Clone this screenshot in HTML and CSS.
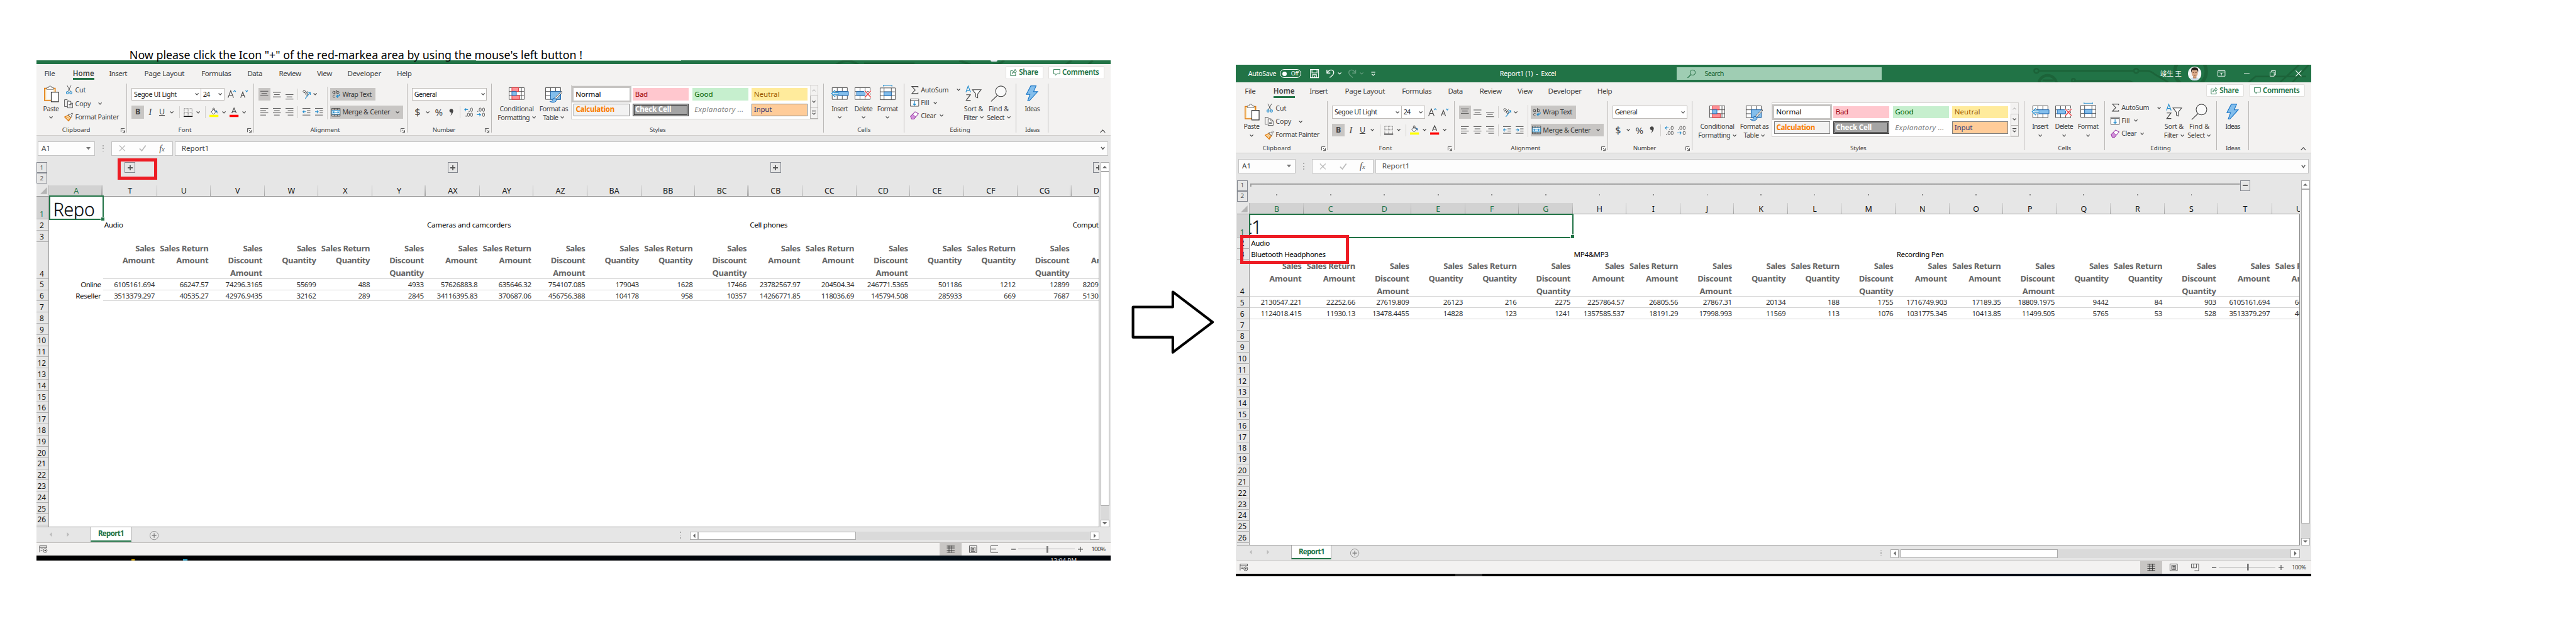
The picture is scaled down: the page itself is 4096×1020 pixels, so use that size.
FILE: index.html
```html
<!DOCTYPE html>
<html lang="en">
<head>
<meta charset="utf-8">
<title>Expanding a column group</title>
<link rel="stylesheet" href="styles.css">
</head>
<body>
<main class="stage" id="stage">
  <section class="win win-a" id="winA"></section>
  <section class="win win-b" id="winB"></section>
  <p class="caption"><span class="t" data-w="808">Now please click the Icon "+" of the red-markea area by using the mouse's left button !</span></p>
  <div class="mark mark-a"></div>
  <div class="mark mark-b"></div>
  <svg class="arrow" viewBox="0 0 150 118"><path d="M4 32H75V5L146 59 75 113V86H4Z" fill="#fff" stroke="#000" stroke-width="4.6" stroke-linejoin="round"/></svg>
</main>
<script src="app.js"></script>
</body>
</html>
```

FILE: styles.css
```css
* { box-sizing: border-box; }
html, body { margin: 0; background: #fff; overflow: hidden; }
.stage {
  position: relative; width: 4596px; height: 1144px; zoom: 0.8912; overflow: hidden;
  font-family: "Noto Sans", "Noto Sans CJK TC", sans-serif; font-size: 12px; color: #444; line-height: 14px;
}
svg { display: block; flex: none; overflow: visible; }
.t { display: inline-block; white-space: pre; flex: none; }
.row { display: flex; align-items: center; }
.grow { flex: 1; }

/* free canvas: windows and annotations */
.win { position: absolute; display: flex; flex-direction: column; background: #e6e6e6; }
.win-a { left: 65px; top: 108px; width: 1917px; height: 893px; }
.win-b { left: 2205px; top: 116px; width: 1919px; height: 913px; padding-left: 2px; }
.win-b .title, .win-b .tabs, .win-b .ribbon, .win-b .status, .win-b .taskbar { margin-left: -2px; padding-left: 2px; }
.caption { position: absolute; left: 231px; top: 84px; margin: 0; font-size: 20px; line-height: 28px; color: #000; }
.mark { position: absolute; border: 5.7px solid #ed1c24; }
.mark-a { left: 210px; top: 283px; width: 71px; height: 38px; }
.mark-b { left: 2213px; top: 420px; width: 194px; height: 51px; }
.arrow { position: absolute; left: 2018px; top: 516px; width: 150px; height: 118px; }

/* title bar */
.title { position: relative; flex: none; height: 31px; display: flex; align-items: center; background: #217346; color: #fff; overflow: hidden; }
.title > * { position: relative; }
.title .pattern { position: absolute; right: 0; top: 0; }
.title-cut { height: 7px; align-items: flex-start; }
.title-cut .edge { width: 366px; height: 1px; margin-left: 784px; background: #9fcdb3; }
.title-cut .chin { width: 13px; height: 2px; margin-left: 552px; border-radius: 0 0 7px 7px; background: #e8ecf4; }
.toggle { width: 38px; height: 16px; border: 1px solid #fff; border-radius: 8px; display: flex; align-items: center; justify-content: space-between; padding: 0 4px 0 3px; font-size: 10px; }
.toggle i { width: 8px; height: 8px; border-radius: 50%; background: #fff; }
.search { width: 366px; height: 22px; background: #9fcdb3; color: #0e5c2f; display: flex; align-items: center; gap: 16px; padding-left: 19px; }
.faded { opacity: .3; }

/* ribbon */
.tabs { flex: none; height: 30px; display: flex; align-items: flex-start; background: #f3f2f1; font-size: 13px; }
.tab { height: 28px; padding-top: 8px; line-height: 15px; }
.tab.on { font-weight: 600; border-bottom: 3.4px solid #217346; }
.btn { height: 23px; margin-top: 3px; background: #fff; border: 1px solid #e1dfdd; border-radius: 2px; display: flex; align-items: center; gap: 4px; color: #217346; font-weight: 600; font-size: 13px; }
.ribbon { flex: none; height: 97px; padding-top: 4px; background: #f3f2f1; border-bottom: 1px solid #d0cecc; display: flex; }
.group { flex: none; height: 92px; display: flex; flex-direction: column; background: linear-gradient(#b4b2b0, #b4b2b0) right top / 1px 88px no-repeat; }
.group-body { height: 76px; display: flex; }
.group-name { height: 16px; display: flex; align-items: center; padding-right: 4px; font-size: 11px; }
.group-name .mid { flex: 1; text-align: center; padding-right: 8px; }
.group-name .mid.solo { padding-right: 0; margin-right: -4px; }
.group-name svg { margin-top: 1px; }
.big { display: flex; flex-direction: column; align-items: center; }
.big .pic { height: 38px; display: flex; align-items: flex-start; justify-content: center; }
.big .row { height: 16px; gap: 4px; }
.big > .t { height: 15px; }
.stack { display: flex; flex-direction: column; }
.small { height: 24px; display: flex; align-items: center; gap: 3px; }
.small .ico { width: 16px; display: flex; justify-content: center; }
.cell { flex: none; height: 23px; display: flex; align-items: center; justify-content: center; }
.cell.on, .pill { background: #c8c6c4; }
.pill { height: 23px; display: flex; align-items: center; gap: 3px; padding-left: 4px; color: #333; }
.vr { flex: none; width: 1px; height: 21px; background: #d2d0ce; }
.select { height: 23px; background: #fff; border: 1px solid #bebbb8; display: flex; align-items: center; justify-content: space-between; padding: 0 3px; color: #222; }
.select + .select { margin-left: -1px; }
.b { font-weight: 700; font-size: 14px; } .i { font: italic 16px "Liberation Serif", serif; } .u { text-decoration: underline; font-size: 14px; }
.gallery { display: flex; width: 441px; height: 62px; margin-top: 2px; border: 1px solid #d2d0ce; background: #fff; }
.swatches { display: grid; grid-template-columns: repeat(4, 100px); grid-auto-rows: 22px; gap: 6px; padding: 5px 4px 0 3px; font-size: 13px; }
.sw { display: flex; align-items: center; padding-left: 4px; border: 0 solid #7f7f7f; }
.sw.normal { color: #000; background: #fff; outline: 3.4px solid #c6c4c2; }
.sw.bad { background: #ffc7ce; color: #9c0006; } .sw.good { background: #c6efce; color: #006100; }
.sw.neutral { background: #ffeb9c; color: #9c5700; }
.sw.calc { background: #f2f2f2; color: #fa7d00; border-width: 1px; padding-left: 3px; font-weight: 700; }
.sw.check { background: #a5a5a5; color: #fff; border: 3.4px double #3f3f3f; padding-left: 1px; font-weight: 700; }
.sw.expl { color: #7f7f7f; font-style: italic; }
.sw.input { background: #ffcc99; color: #3f3f76; border-width: 1px; padding-left: 3px; }
.pager { width: 15px; display: flex; flex-direction: column; background: #f3f2f1; }
.pager span { flex: 1; border: 1px solid #b4b2b0; margin: -1px -1px 0 0; display: flex; align-items: center; justify-content: center; }
.pager span:first-child { border-color: #d2d0ce; opacity: .55; }

/* formula bar */
.formula { flex: none; height: 36px; padding: 10px 5px 0 2px; display: flex; font-size: 13px; }
.box { height: 26px; border: 1px solid #c3c3c3; background: #fdfdfd; display: flex; align-items: center; color: #444; }
.dots { display: flex; flex-direction: column; gap: 3px; align-self: center; }
.dots i { width: 2px; height: 2px; background: #aaa; }

/* sheet */
.sheet { flex: none; height: 664px; display: flex; }
.grid { width: 1896px; height: 664px; overflow: hidden; display: flex; flex-direction: column; }
.outline { flex: none; height: 53px; display: flex; padding-top: 12px; }
.levels { width: 23px; flex: none; }
.lv { width: 19px; height: 19px; border: 1px solid #83878f; display: flex; align-items: center; justify-content: center; font-size: 11px; color: #555; }
.oc { flex: none; width: 96px; height: 41px; display: flex; flex-direction: column; align-items: center; }
.oc.line { background: linear-gradient(#999, #999) 0 6px / 100% 2px no-repeat; padding-top: 25px; }
.oc.line i { width: 2px; height: 2px; background: #888; }
.oc.first { background: linear-gradient(#999, #999) 1px 6px / 100% 2px no-repeat, linear-gradient(#999, #999) 1px 6px / 2px 6px no-repeat; }
.oc.last { background: linear-gradient(#999, #999) 0 6px / 39px 2px no-repeat; }
.oc .lv { background: #e6e6e6; }
.heads { flex: none; height: 20px; display: flex; border-bottom: 1px solid #999; color: #111; font-size: 14px; }
.corner { width: 23px; flex: none; border-right: 1px solid #b4b4b4; display: flex; justify-content: flex-end; align-items: center; padding: 0 3px 0 0; }
.h { flex: none; width: 96px; height: 19px; display: flex; align-items: center; justify-content: center; background: linear-gradient(#ccc, #999) right / 1px 100% no-repeat; padding-top: 2px; }
.h.gap { background: linear-gradient(#ccc, #999) 93px 0 / 1px 100% no-repeat, linear-gradient(#ccc, #999) right / 1px 100% no-repeat; }
.h.on { background-color: #d2d2d2; color: #217346; }
.rows { flex: 1; background: #fff; border-right: 1px solid #8c8c8c; border-bottom: 1px solid #999; overflow: hidden; }
.grid { position: relative; }
.r { display: flex; height: 20px; }
.r.r1 { height: 41px; } .r.r4 { height: 66px; }
.n { flex: none; width: 23px; background: #e6e6e6; border-right: 1px solid #999; border-bottom: 1px solid #b0b0b0; display: flex; justify-content: center; align-items: flex-end; padding: 0 3px 0 0; font-size: 13.5px; line-height: 17px; color: #111; }
.n.on { background: #d2d2d2; color: #217346; }
.c { flex: none; width: 96px; display: flex; flex-direction: column; align-items: flex-end; padding: 0 4px 0 2px; font-size: 13px; line-height: 21px; color: #333; }
.c.cut, .c.left { align-items: flex-start; color: #000; }
.c.cut.num { padding-left: 20px; color: #333; }
.c.rule { border-bottom: 1px solid #d3d3d3; }
.c.lab { color: #111; }
.r4 .c { font-size: 14.67px; font-weight: 700; line-height: 22px; color: #666; padding-top: 1px; }
.c.sel { font: 300 32px/46px "Open Sans", sans-serif; color: #000; -webkit-text-stroke: .4px #000; padding: 0; overflow: hidden; }
.sel-a { align-items: flex-start; padding-left: 7px !important; }
.c.sel-b { width: 21px; }
.pick { position: absolute; top: 71px; left: 22px; height: 44px; border: 2.4px solid #217346; }
.pick::after { content: ""; position: absolute; right: -4px; bottom: -3px; width: 6px; height: 6px; background: #217346; border: solid #fff; border-width: 1.2px 0 0 1.2px; }
.pick-a { width: 98px; } .pick-b { width: 579px; left: 21px; }
.vbar { width: 15px; height: 652px; margin: 12px 0 0 3px; background: #dadada; display: flex; flex-direction: column; }
.knob { background: #fff; border: 1px solid #ababab; display: flex; align-items: center; justify-content: center; flex: none; }

/* bottom bars */
.sheetbar { flex: none; height: 28px; display: flex; align-items: flex-start; border-bottom: 1px solid #c0bebc; }
.sheettab { width: 72px; height: 25px; margin-left: 35px; background: #fff; border: 1px solid #ababab; border-top: 0; border-bottom: 2.4px solid #217346; color: #217346; font-weight: 700; font-size: 13px; display: flex; align-items: center; justify-content: center; }
.hbar { width: 730px; height: 15px; margin: 7px 0 0 16px; background: #dadada; display: flex; }
.status { flex: none; height: 22px; display: flex; align-items: center; background: #f3f2f1; }
.view { width: 40px; height: 22px; display: flex; align-items: center; justify-content: center; }
.view.on { background: #c8c6c4; }
.slider { width: 101px; height: 12px; margin: 0 5px 0 5px; background: linear-gradient(#777, #777) 50px 0 / 3px 12px no-repeat, linear-gradient(#aaa, #aaa) 0 5px / 100% 1.2px no-repeat; }
.pct { font-size: 11px; margin-left: 15px; }
.taskbar { flex: none; height: 9px; display: flex; align-items: flex-end; background: linear-gradient(90deg, #000 0, #010308 60%, #00101c 78%, #010309 100%); overflow: hidden; }
.win-b .taskbar { height: 5px; }
.clock { align-self: flex-start; height: 6px; margin: 3px 0 0 1369px; color: #ddd; font-size: 11px; line-height: 12px; overflow: hidden; }
```

FILE: app.js
```js
const T = (s, w, c = '') => `<span class="t ${c}"${w ? ` data-w="${w}"` : ''}>${s.replace(/&/g, '&amp;')}</span>`;
const svg = (w, h, body, extra = '') => `<svg width="${w}" height="${h}" viewBox="0 0 ${w} ${h}" fill="none" stroke="#444" ${extra}>${body}</svg>`;
const CH = svg(7, 4, '<path d="M.7.5 3.5 3.2 6.3.5" stroke-width="1.3"/>');
const cell = (w, s, c = '') => `<div class="cell ${c}" style="width:${w}px">${s}</div>`;
const sp = w => `<span style="width:${w}px;flex:none"></span>`;
const lines = (ys, ws, al) => ys.map((y, i) => { const x = al === 'r' ? 14 - ws[i] : al === 'c' ? (14 - ws[i]) / 2 : 0; return `<path d="M${x} ${y}h${ws[i]}"/>`; }).join('');

const I = {
  paste: svg(28, 30, '<path d="M2 5h19v22H2z" fill="#fbe3b5" stroke="#e07b10" stroke-width="1.6"/><path d="M5 7h13v18H5z" fill="#fafafa" stroke="none"/><path d="M6 7V4h3a3 3 0 0 1 6 0h3v3z" fill="#fff" stroke="#666"/><path d="M14 12h13v17H14z" fill="#fff" stroke="#333" stroke-width="1.3"/>'),
  cut: svg(11, 16, '<path d="M2 0 8 11M9 0 3 11"/><circle cx="2.5" cy="13" r="2" stroke="#1e8bcd" stroke-width="1.3"/><circle cx="8.5" cy="13" r="2" stroke="#1e8bcd" stroke-width="1.3"/>'),
  copy: svg(16, 16, '<path d="M5 13H.7V.7h5L8 3"/><path d="M6 3.5h5.5L15 7v8.3H6z" fill="#fff"/><path d="M11 4v3.5h4M8 9.500h5M8 12h5"/>'),
  brush: svg(16, 16, '<path d="M1 8 7 5l5 4-4 6z" fill="#fbe3b5" stroke="#e07b10" stroke-width="1.5"/><path d="m3 10 5-1M8 14l1-4" stroke="#e07b10"/><path d="m7 4 5 5 1.500-2-1-1L15.500 2 14 .7 10.500 4 9 3z" fill="#fff"/>'),
  launch: svg(8, 8, '<path d="M.5 7V.5H7M3 3l4 4M7.300 3.500v4h-4"/>'),
  growA: svg(15, 15, '<path d="M.7 14 5.500 1.500 10.500 14M2.500 9.500h6.300" stroke-width="1.2"/><path d="M10.500 3.500 12.500 1l2 2.500" stroke="#1e8bcd" stroke-width="1.2"/>'),
  shrinkA: svg(14, 15, '<path d="M.7 14 4.500 4 8.500 14M2 10.500h5" stroke-width="1.2"/><path d="m9.500 1 2 2.500 2-2.500" stroke="#1e8bcd" stroke-width="1.2"/>'),
  borders: svg(16, 16, '<path d="M1 1h14v13M1 1v13M8 1v13M1 7.500h14" stroke-dasharray="1 1"/><path d="M0 15h16" stroke="#111" stroke-width="1.6"/>'),
  fill: svg(16, 16, '<path d="M3 7 8 2l4 5-5 4z" fill="#fff"/><path d="M6 5V1.500a1.500 1.500 0 0 1 3 0V6"/><path d="M11 4q4 0 3 6-1-4-4-4" fill="#2b6ea8" stroke="none"/><path d="M0 14h16" stroke="#ff0" stroke-width="4"/>'),
  color: svg(16, 16, '<path d="M4 9 8 0l4 9M5.300 6.500h5.400" stroke-width="1.3"/><path d="M0 14h16" stroke="#f00" stroke-width="4"/>'),
  vTop: svg(14, 17, lines([2.5, 6.5, 10.5], [14, 10, 14], 'c')),
  vMid: svg(14, 17, lines([4.5, 8.5, 12.5], [14, 10, 14], 'c')),
  vBot: svg(14, 17, lines([8.5, 12.5, 16.5], [14, 10, 14], 'c')),
  hL: svg(14, 14, lines([.5, 4.500, 8.500, 12.500], [14, 10, 14, 10], 'l')),
  hC: svg(14, 14, lines([.5, 4.500, 8.500, 12.500], [14, 10, 14, 10], 'c')),
  hR: svg(14, 14, lines([.5, 4.500, 8.500, 12.500], [14, 10, 14, 10], 'r')),
  orient: svg(16, 16, '<g transform="rotate(45 6 6)"><circle cx="2.500" cy="5" r="2"/><path d="M4.700 2.500v5M7 0v7.500"/><circle cx="9" cy="5" r="2"/></g><path d="M6 15.500 15 4.500M10.500 4.500H15V9" stroke="#1e8bcd" stroke-width="1.2"/>'),
  out: svg(14, 14, '<path d="M0 .5h14M8 4.500h6M8 8.500h6M0 12.500h14"/><path d="M6 6.500H.7M3 4 .7 6.500 3 9" stroke="#1e8bcd" stroke-width="1.2"/>'),
  inn: svg(14, 14, '<path d="M0 .5h14M8 4.500h6M8 8.500h6M0 12.500h14"/><path d="M0 6.500h5.500M3.300 4l2.300 2.500L3.300 9" stroke="#1e8bcd" stroke-width="1.2"/>'),
  wrap: svg(15, 15, '<circle cx="3" cy="4.500" r="2"/><path d="M5.300 2.500v4.500M8.500 0v7"/><circle cx="10.500" cy="4.500" r="2"/><path d="M5 9.500a2.300 2.300 0 1 0 0 4"/><path d="M13.500 7.500q1 4-5.500 4M10.500 8.800 8 11.500l2.500 2.700" stroke="#1e8bcd" stroke-width="1.5"/>'),
  merge: svg(16, 15, '<path d="M.5.5h15v14H.500zM.5 3.500h15M.5 11.500h15M5.500.5v3M10.500.5v3M5.500 11.500v3M10.500 11.500v3"/><path d="M1 4h14v7H1z" fill="#fff" stroke="#1e8bcd"/><path d="M2.500 7.500h11M5 5.500l-2 2 2 2M11 5.500l2 2-2 2" stroke="#1e8bcd" stroke-width="1.2"/>'),
  cond: svg(28, 22, '<path d="M.5.5h27v21H.500zM.5 7.500h27M.5 14.500h27M22.500.5v21" fill="#fff"/><path d="M5.500.5h12v7h-12zM5.500 14.500h14v7h-14z" fill="#ff8f94" stroke="#e0262d"/><path d="M5.500 7.500h8v7h-8z" fill="#83beec" stroke="#1464b0"/>'),
  table: svg(30, 27, '<path d="M.5.5h27v21H.500zM.5 7.500h27M.5 14.500h27M9.500.5v21M18.500.5v21" fill="#fff"/><path d="M9.500 7.500h18v14h-18z" fill="#83beec" stroke="#1464b0"/><path d="M29 7 17 19l2 2L30 9z" fill="#fff"/><path d="M17 19q-4 0-4 4-1 3-5 2 6 4 11 0 2-2 0-4z" fill="#83beec" stroke="#1464b0"/>'),
  ins: svg(32, 22, '<path d="M2.500.5h27v21h-27zM11.500.5v21M20.500.5v21M2.500 7.500h27M2.500 14.500h27" fill="#fff"/><path d="M10 7.500h21.500v7H10z" fill="#83beec" stroke="#1464b0"/><path d="M13 9.500H6M13 12.500H6M8 5 1.500 11 8 17" stroke="#fff" stroke-width="3"/><path d="M14 9.500H5M14 12.500H5M8 5 1.500 11 8 17" stroke="#1e8bcd" stroke-width="1.500"/>'),
  del: svg(30, 22, '<path d="M.5.5h27v21H.500zM9.500.5v21M18.500.5v21" fill="#fff"/><path d="M.5 7.500h27M.5 14.500h27"/><path d="M3.500 7.500h15v7h-15z" fill="#83beec" stroke="#1464b0"/><path d="m18 6 11 12M29 6 18 18" stroke="#f3f2f1" stroke-width="4"/><path d="m18 6 11 12M29 6 18 18" stroke="#ea4046" stroke-width="1.500"/>'),
  fmt: svg(28, 27, '<path d="M6 1.500h16M6.500 0v3M21.500 0v3" stroke="#1e8bcd"/><path d="M.5 5.500h27v21H.500zM7.500 5.500v21M20.500 5.500v21M.5 12.500h27M.5 19.500h27" fill="#fff"/><path d="M7.500 12.500h13v7h-13z" fill="#83beec" stroke="#1464b0"/>'),
  sum: svg(13, 14, '<path d="M12 2.500V.7H1L7 7l-6 6.300h11v-1.800" stroke-width="1.200"/>'),
  down: svg(16, 14, '<path d="M.5.5h15v13H.500zM.5 3h15" fill="#fff"/><path d="M8 4.500v7M5.300 9 8 11.700 10.700 9" stroke="#1e8bcd" stroke-width="1.300"/>'),
  clear: svg(16, 15, '<path d="M1 9 9 1l6 3.500L7 14H3z" fill="#fff" stroke="#9b3fa8" stroke-width="1.200"/><path d="M1 9 4.500 5.500 10 10 7 14H3z" fill="#d390da" stroke="#9b3fa8"/>'),
  sort: svg(29, 28, '<path d="M1 12 5 1l4.300 11M2.500 8.500h5.500" stroke="#1e8bcd" stroke-width="1.300"/><path d="M1.500 16.500H9L1.500 26.500H9.500" stroke-width="1.300"/><path d="M12.500 7.500h15.500l-6 7.500v7l-3.500-1.500V15z" fill="#fff" stroke-width="1.200"/>'),
  find: svg(30, 29, '<circle cx="18.500" cy="10.500" r="9.500" fill="#fafafa" stroke-width="1.200"/><path d="M12 18 1 28.500" stroke-width="1.300"/>'),
  idea: svg(22, 28, '<path d="M9 .7h9.500L14 11h7.300L6.500 27.300H3.500L7.500 16H1z" fill="#83beec" stroke="#1472c4" stroke-width="1.200"/>'),
  share: svg(12, 14, '<path d="M5 4H1v9h9V9" stroke="#217346"/><path d="M4 9q0-4 5-5V1.500L11.500 5 9 8.500V6.500Q6 6.500 4 9z" stroke="#217346"/>'),
  comment: svg(12, 12, '<path d="M.5.500h11v8H6L3.500 11V8.500h-3z" stroke="#217346"/>'),
  decL: svg(16, 17, '<path d="M7 4H1M3.500 1.500 1 4l2.500 2.500" stroke="#1e8bcd" stroke-width="1.200"/><circle cx="3.500" cy="15.500" r=".6"/><rect x="6" y="10" width="3.500" height="6" rx="1.700"/><rect x="11.500" y="10" width="3.500" height="6" rx="1.700"/><rect x="11.500" y="1" width="3.500" height="6" rx="1.700"/><circle cx="9" cy="7" r=".4"/>'),
  decR: svg(16, 17, '<circle cx="2" cy="7" r=".4"/><rect x="4.500" y="1" width="3.500" height="6" rx="1.700"/><rect x="10.500" y="1" width="3.500" height="6" rx="1.700"/><path d="M0 13h7M4.500 10.500 7 13l-2.500 2.500" stroke="#1e8bcd" stroke-width="1.200"/><rect x="10.500" y="10" width="3.500" height="6" rx="1.700"/>')
};

const group = (w, body, name, nw, launch) => `<div class="group" style="width:${w}px"><div class="group-body">${body}</div><div class="group-name"><span class="mid ${launch ? '' : 'solo'}">${T(name, nw)}</span>${launch ? I.launch : ''}</div></div>`;
const big = (w, top, icon, l1, w1, l2, w2) => `<div class="big" style="width:${w}px"><div class="pic" style="padding-top:${top}px">${icon}</div>${T(l1, w1)}<div class="row">${l2 ? T(l2, w2) : ''}${l2 === null ? '' : CH}</div></div>`;
const small = (icon, s, w, after, h) => `<div class="small" style="height:${h || 24}px"><span class="ico">${icon}</span>${T(s, w)}${after ? sp(after) + CH : ''}</div>`;

function ribbon() {
  const clip = `<div style="padding-left:2px">${big(48, 4, I.paste, 'Paste', 28, '', 0)}</div><div class="stack">${small(I.cut, 'Cut', 19)}${small(I.copy, 'Copy', 28, 7)}${small(I.brush, 'Format Painter', 78)}</div>`;
  const font = `<div class="stack" style="padding:8px 0 0 8px;gap:9px"><div class="row"><div class="select" style="width:124px">${T('Segoe UI Light', 76)}${CH}</div><div class="select" style="width:43px">${T('24', 12)}${CH}</div>${sp(5)}${I.growA}${sp(8)}${I.shrinkA}</div>
  <div class="row">${cell(22, '<span class="b">B</span>', 'on')}${cell(22, '<span class="i">I</span>')}${cell(20, '<span class="u">U</span>')}${cell(16, CH)}${sp(5)}<i class="vr"></i>${sp(7)}${I.borders}${cell(20, CH)}${sp(2)}<i class="vr"></i>${sp(7)}${I.fill}${cell(20, CH)}${I.color}${cell(20, CH)}</div></div>`;
  const align = `<div class="stack" style="padding:8px 0 0 8px;gap:9px"><div class="row">${cell(22, I.vTop, 'on')}${cell(22, I.vMid)}${cell(22, I.vBot)}${sp(4)}<i class="vr"></i>${sp(7)}${I.orient}${sp(4)}${CH}</div><div class="row">${cell(22, I.hL)}${cell(22, I.hC)}${cell(22, I.hR)}${sp(4)}<i class="vr"></i>${sp(8)}${I.out}${sp(8)}${I.inn}</div></div>
  <i class="vr" style="height:58px;margin:6px 4px 0 8px"></i><div class="stack" style="padding-top:8px;gap:9px"><div class="pill" style="width:81px">${I.wrap}${T('Wrap Text', 52)}</div><div class="pill" style="width:130px;padding-left:3px">${I.merge}${T('Merge & Center', 85)}${sp(4)}${CH}</div></div>`;
  const num = `<div class="stack" style="padding:8px 0 0 8px;gap:9px"><div class="select" style="width:134px">${T('General', 40)}${CH}</div><div class="row">${cell(20, '<span style="font-size:18px">$</span>')}${cell(16, CH)}${cell(24, '<span style="font-size:17px">%</span>')}${cell(20, '<svg width="8" height="13" viewBox="0 0 8 13"><circle cx="4" cy="3.500" r="3.300" fill="#444"/><path d="M7.300 3.500Q7.500 9 2.500 12.500 5 9 4 6z" fill="#444"/></svg>')}${sp(5)}<i class="vr"></i>${sp(7)}${I.decL}${sp(7)}${I.decR}</div></div>`;
  const sw = [['normal', 'Normal', 45], ['bad', 'Bad', 22.5], ['good', 'Good', 33], ['neutral', 'Neutral', 46], ['calc', 'Calculation', 69], ['check', 'Check Cell', 64], ['expl', 'Explanatory ...', 88], ['input', 'Input', 32]];
  const up = svg(7, 4, '<path d="M.7 3.500 3.500.8 6.300 3.500"/>');
  const styles = `${sp(10)}${big(70, 7, I.cond, 'Conditional', 61, 'Formatting', 57)}${big(62, 7, I.table, 'Format as', 51, 'Table', 27)}<div class="gallery"><div class="swatches">${sw.map(s => `<div class="sw ${s[0]}">${T(s[1], s[2])}</div>`).join('')}</div><div class="grow"></div><div class="pager"><span>${up}</span><span>${CH}</span><span>${svg(7, 8, '<path d="M0 .7h7M.7 4 3.500 6.700 6.300 4" stroke-width="1.300"/>')}</span></div></div>`;
  const cells = `${sp(7)}${big(42, 7, I.ins, 'Insert', 28.6, '', 0)}${big(43, 7, I.del, 'Delete', 32, '', 0)}${big(43, 2, I.fmt, 'Format', 36.6, '', 0)}`;
  const edit = `<div class="stack" style="width:101px;padding-left:11px">${small(I.sum, 'AutoSum', 49.5, 8, 23)}${small(I.down, 'Fill', 15, 1, 23)}${small(I.clear, 'Clear', 27, 1, 23)}</div>${big(46, 4, I.sort, 'Sort &', 34, 'Filter', 25)}${big(44, 4, I.find, 'Find &', 36, 'Select', 31)}`;
  const ideas = big(57, 4, I.idea, 'Ideas', 26, null);
  return `<div class="ribbon">${group(162, clip, 'Clipboard', 50.5, 1)}${group(226, font, 'Font', 23.7, 1)}${group(274, align, 'Alignment', 52.7, 1)}${group(150, num, 'Number', 40.6, 1)}${group(593, styles, 'Styles', 28.6)}${group(143, cells, 'Cells', 23.7)}${group(200, edit, 'Editing', 36.6)}${group(58, ideas, 'Ideas', 26)}<span class="grow"></span>${svg(10, 6, '<path d="M.7 5.500 5 1l4.300 4.500" stroke-width="1.300"/>', 'style="margin:82px 9px 0 0"')}</div>`;
}

function tabs() {
  const list = [['File', 14, 19], ['Home', 32, 38], ['Insert', 26.6, 32], ['Page Layout', 31, 71.4], ['Formulas', 30.4, 52.7], ['Data', 29.4, 26.3], ['Review', 30, 39.3], ['View', 28.5, 26.8], ['Developer', 27.6, 60], ['Help', 28, 26.3]];
  return `<div class="tabs">${list.map((t, i) => `<div class="tab ${i === 1 ? 'on' : ''}" style="margin-left:${t[1]}px">${T(t[0], t[2])}</div>`).join('')}<span class="grow"></span><div class="btn" style="width:68px;padding-left:7px">${I.share}${T('Share', 34)}</div>${sp(8)}<div class="btn" style="width:100px;padding-left:8px">${I.comment}${T('Comments', 65.6)}</div>${sp(12)}</div>`;
}

const formula = () => `<div class="formula"><div class="box" style="width:102px;padding-left:6px">${T('A1', 16)}<span class="grow"></span><svg width="8" height="5" style="margin-right:6px"><path d="M0 0h8L4 5z" fill="#777"/></svg></div><div class="dots" style="margin:0 14px"><i></i><i></i><i></i></div><div class="box" style="width:110px;padding-left:12px">${svg(12, 11, '<path d="m1 .5 10 10M11 .5 1 10.500" stroke="#bbb" stroke-width="1.500"/>')}${sp(24)}${svg(13, 11, '<path d="m1 6 4 4L12 .5" stroke="#bbb" stroke-width="2"/>')}${sp(23)}<span style="font:italic 16px 'Liberation Serif',serif;color:#555">f<span style="font-size:12px">x</span></span></div>${sp(3)}<div class="box grow" style="padding-left:11px">${T('Report1', 49)}<span class="grow"></span>${svg(8, 6, '<path d="m1 1 3 4 3-4" stroke="#555" stroke-width="1.600"/>', 'style="margin-right:4px"')}</div></div>`;

const HW = { Sales: 34.4, 'Sales Return': 86.7, Amount: 57.4, Quantity: 61, Discount: 61.2 };
const HEAD = [['Sales', 'Amount'], ['Sales Return', 'Amount'], ['Sales', 'Discount', 'Amount'], ['Sales', 'Quantity'], ['Sales Return', 'Quantity'], ['Sales', 'Discount', 'Quantity']];
const numT = s => T(s, s.replace('.', '').length * 7 + (s.includes('.') ? 2.7 : 0));

function sheet(d) {
  const n = d.cols.length, first = d.first;
  const oc = d.cols.map((c, i) => d.outline(c, i)).join('');
  const heads = d.cols.map(c => `<div class="h ${d.gaps.includes(c) ? 'gap' : ''} ${d.on.includes(c) ? 'on' : ''}">${c}</div>`).join('');
  const text = (map) => d.cols.map(c => `<div class="c left">${map[c] ? T(map[c][0], map[c][1]) : ''}</div>`).join('');
  const head = d.cols.map((c, i) => i < first ? '<div class="c"></div>' : `<div class="c rule">${HEAD[(i - first) % 6].map(s => T(s, HW[s])).join('')}</div>`).join('');
  const nums = (a, lab) => d.cols.map((c, i) => {
    if (i < first) return `<div class="c lab">${T(lab[0], lab[1])}</div>`;
    const v = a[i - first], cut = d.cutNum && i === n - 1;
    return `<div class="c rule ${cut ? 'cut num' : ''}">${numT(v)}</div>`;
  }).join('');
  const r = (k, body, cls = '') => `<div class="r ${cls}"><div class="n ${k === 1 ? 'on' : ''}">${k}</div>${body}</div>`;
  let rows = r(1, d.cell1, 'r1') + r(2, text(d.row2)) + r(3, text(d.row3)) + r(4, head, 'r4') + r(5, nums(d.n5, ['Online', 36])) + r(6, nums(d.n6, ['Reseller', 45]));
  for (let k = 7; k <= 26; k++) rows += r(k, '');
  rows += '<div class="r"><div class="n"></div></div>';
  const tri = (p, w, h) => `<svg width="${w}" height="${h}"><path d="${p}" fill="#666"/></svg>`;
  return `<div class="sheet"><div class="grid"><div class="outline"><div class="levels"><div class="lv">1</div><div class="lv">2</div></div>${oc}</div><div class="heads"><div class="corner"><svg width="12" height="12"><path d="M12 0v12H0z" fill="#b4b4b4"/></svg></div>${heads}</div><div class="rows">${rows}</div><div class="pick ${d.pick}"></div></div>
  <div class="vbar"><div class="knob" style="height:16px">${tri('M0 4h8L4 0z', 8, 4)}</div><div class="knob" style="height:597px"></div><span class="grow"></span><div class="knob" style="height:14px">${tri('M0 0h8L4 4z', 8, 4)}</div></div></div>
  <div class="sheetbar"><svg width="40" height="10" style="margin:8px 0 0 22px"><path d="M5 0v8L1 4zM32 0v8l4-4z" fill="#bbb"/></svg><div class="sheettab">${T('Report1', 46)}</div>${svg(16, 16, '<circle cx="8" cy="8" r="7.500" stroke="#888"/><path d="M8 4v8M4 8h8" stroke="#777" stroke-width="1.300"/>', 'style="margin:6px 0 0 33px"')}<span class="grow"></span><div class="dots"><i></i><i></i><i></i></div><div class="hbar"><div class="knob" style="width:15px">${tri('M4 0v8L0 4z', 4, 8)}</div>${sp(d.hoff)}<div class="knob" style="width:281px"></div><span class="grow"></span><div class="knob" style="width:16px">${tri('M0 0v8l4-4z', 4, 8)}</div></div>${sp(21)}</div>
  <div class="status">${sp(5)}${svg(16, 13, '<path d="M1 12V.700h13V4M1 3.500h13M3 6h4M3 8.500h3"/><circle cx="11" cy="9" r="3.500"/><circle cx="11" cy="9" r="1" fill="#444"/>')}<span class="grow"></span>
  <div class="view on">${svg(15, 13, '<path d="M.5 1h14M.5 4.500h14M.5 8.500h14M.5 12h14M4.500 0v13M9.500 0v13" stroke="#333"/>')}</div><div class="view">${svg(14, 13, '<path d="M.5.5h13v12H.500zM3.500 3h7v7.500h-7zM5 5h4M5 7h4M5 9h4"/>')}</div><div class="view" style="width:36px">${svg(14, 13, d.third)}</div>${sp(12)}${svg(8, 9, '<path d="M0 4.500h8" stroke-width="1.400"/>')}<div class="slider"></div>${svg(9, 9, '<path d="M0 4.500h9M4.500 0v9" stroke-width="1.200"/>')}${T('100%', 25, 'pct')}${sp(10)}</div>
  <div class="taskbar">${d.task}</div>`;
}

const plus = svg(9, 9, '<path d="M0 4.500h9M4.500 0v9" stroke="#555" stroke-width="2"/>');
const A = {
  cols: ['A', 'T', 'U', 'V', 'W', 'X', 'Y', 'AX', 'AY', 'AZ', 'BA', 'BB', 'BC', 'CB', 'CC', 'CD', 'CE', 'CF', 'CG', 'DF'],
  first: 1, on: ['A'], gaps: ['A', 'Y', 'BC', 'CG'], cutNum: true, hoff: 0, pick: 'pick-a',
  outline: c => `<div class="oc">${['T', 'AX', 'CB', 'DF'].includes(c) ? `<div class="lv">${plus}</div>` : ''}</div>`,
  cell1: `<div class="c sel sel-a">${T('Repo', 74)}</div>`,
  row2: { T: ['Audio', 33.5], AX: ['Cameras and camcorders', 149.5], CB: ['Cell phones', 67], DF: ['Comput', 46] }, row3: {},
  n5: '6105161.694 66247.57 74296.3165 55699 488 4933 57626883.8 635646.32 754107.085 179043 1628 17466 23782567.97 204504.34 246771.5365 501186 1212 12899 8209'.split(' '),
  n6: '3513379.297 40535.27 42976.9435 32162 289 2845 34116395.83 370687.06 456756.388 104178 958 10357 14266771.85 118036.69 145794.508 285933 669 7687 5130'.split(' '),
  third: '<path d="M13.500.5H.500v12h13M.5 6.500H10"/>',
  task: '<svg width="270" height="2" style="margin-left:170px"><path d="M0 0h6v2H0z" fill="#e8b400"/><path d="M92 0h8v2h-8z" fill="#2cb5e0"/></svg><div class="clock"><span class="t" data-w="47">12:04 PM</span></div>'
};
const B = {
  cols: 'BCDEFGHIJKLMNOPQRSTU'.split(''), first: 0, on: 'BCDEFG'.split(''), gaps: [], hoff: 3, pick: 'pick-b',
  outline: (c, i) => c === 'U' ? '<div class="oc"></div>' : c === 'T' ? `<div class="oc last"><div class="lv">${svg(9, 9, '<path d="M0 4.500h9" stroke="#555" stroke-width="2"/>')}</div></div>` : `<div class="oc line ${i ? '' : 'first'}"><i></i></div>`,
  cell1: `<div class="c sel sel-b">${T('t1', 28)}</div>`,
  row2: { B: ['Audio', 33.5] }, row3: { B: ['Bluetooth Headphones', 133], H: ['MP4&MP3', 62], N: ['Recording Pen', 84] },
  n5: '2130547.221 22252.66 27619.809 26123 216 2275 2257864.57 26805.56 27867.31 20134 188 1755 1716749.903 17189.35 18809.1975 9442 84 903 6105161.694 66247.57'.split(' '),
  n6: '1124018.415 11930.13 13478.4455 14828 123 1241 1357585.537 18191.29 17998.993 11569 113 1076 1031775.345 10413.85 11499.505 5765 53 528 3513379.297 40535.27'.split(' '),
  third: '<path d="M.5 7.500V.500h13v12H6M4.500.5v7H.500M9.500.5v7h-5"/>',
  task: '<svg width="48" height="5" style="margin-left:389px"><path d="M0 0h48v5H0z" fill="#333"/></svg>'
};

const W = 'stroke="#fff"';
const titleA = '<div class="title title-cut"><svg class="pattern" width="560" height="7" fill="none" stroke="#1c6339" stroke-width="4"><path d="M70 8q20-14 40 0M120 6h90M290 0l20 8M370 0q-8 8-20 8M480 8l10-8M520 8l8-8"/></svg><span class="edge"></span><span class="chin"></span></div>';
const titleB = `<div class="title"><svg class="pattern" width="500" height="31" fill="none" stroke="#1c6339" stroke-width="3"><circle cx="9" cy="11" r="4"/><path d="M13 11h169M192 11h14q8 0 14 6l24 14"/><circle cx="187" cy="11" r="4"/><circle cx="29" cy="35" r="16" stroke-width="5"/><path d="M20 28h20M24 32h14"/><circle cx="75" cy="28" r="3"/><path d="M79 29h96l8 4M388 31l12-10h90M444 31 480-2M466 31l30-32"/><circle cx="284" cy="12" r="28" stroke-width="6"/></svg>
${sp(20)}${T('AutoSave', 50)}${sp(7)}<div class="toggle"><i></i>${T('Off', 13.4)}</div>${sp(15)}
${svg(16, 16, `<path d="M.7.7h14.600v14.600H.700zM3.500.7v6h9v-6M4.500 15v-5h7v5M8.500 12v3" ${W} stroke-width="1.200"/>`)}${sp(14)}
${svg(14, 16, `<path d="M1 1v6h6M1 7Q5 1 9 1.500q5 1 4 6Q12 11 6 15" ${W} stroke-width="1.500"/>`)}${sp(6)}${svg(7, 4, `<path d="M.7.5 3.500 3.200 6.300.500" ${W} stroke-width="1.300"/>`)}${sp(12)}
<span class="row faded">${svg(14, 16, `<path d="M13 1v6H7M13 7Q9 1 5 1.500q-5 1-4 6Q2 11 8 15" ${W} stroke-width="1.500"/>`)}${sp(6)}${svg(7, 4, `<path d="M.7.5 3.500 3.200 6.300.500" ${W} stroke-width="1.300"/>`)}</span>${sp(13)}
${svg(8, 8, `<path d="M.5 1h7M1.200 4 4 6.700 6.800 4" ${W} stroke-width="1.300"/>`)}${sp(222)}${T('Report1 (1)  -  Excel', 100.5)}${sp(215)}
<div class="search">${svg(15, 15, '<circle cx="9.500" cy="5" r="4.500" stroke="#0e5c2f"/><path d="M6.500 8.500.500 14.500" stroke="#0e5c2f" stroke-width="1.200"/>')}${T('Search', 34)}</div><span class="grow"></span>
${T('竣生 王', 38)}${sp(12)}
<svg width="24" height="25" viewBox="0 0 24 25"><clipPath id="face"><ellipse cx="12" cy="12.500" rx="12" ry="12.500"/></clipPath><g clip-path="url(#face)"><path d="M0 0h24v25H0z" fill="#f4f5f7"/><path d="M3 25q1-6 9-6t9 6z" fill="#cfe0ee"/><path d="M9 15h6v6H9z" fill="#c48f6c"/><ellipse cx="12" cy="11.500" rx="5.500" ry="7" fill="#d9a888"/><path d="M6 11Q4 1 12 1.500 20 1 18 11q-1-5-3-5-5 1-7 0-1 1-2 5z" fill="#2a201c"/><path d="M8.500 10.500h2.500M13 10.500h2.500M10.500 15.500h3" stroke="#6a3f2c"/></g></svg>${sp(28)}
${svg(14, 11, `<path d="M.6.6h12.800v9.800H.600zM.6 3h12.800M7 9V4.500M5 6.500l2-2 2 2" ${W}/>`)}${sp(34)}${svg(11, 11, `<path d="M0 5.500h10" ${W}/>`)}${sp(35)}${svg(11, 11, `<path d="M.6 3h7.400v7.400H.600zM3 3V.600h7.400V8H8" ${W}/>`)}${sp(35)}${svg(11, 11, `<path d="m.5.500 10 10M10.500.500l-10 10" ${W} stroke-width="1.200"/>`)}${sp(17)}</div>`;

document.getElementById('winA').innerHTML = titleA + tabs() + ribbon() + formula() + sheet(A);
document.getElementById('winB').innerHTML = titleB + tabs() + ribbon() + formula() + sheet(B);

// Tighten or loosen each label so it takes exactly its slot's width.
const stage = document.getElementById('stage');
const k = stage.getBoundingClientRect().width / 4596;
document.querySelectorAll('[data-w]').forEach(el => {
  const w = el.getBoundingClientRect().width / k;
  el.style.letterSpacing = ((el.dataset.w - w) / el.textContent.length).toFixed(3) + 'px';
});
```
